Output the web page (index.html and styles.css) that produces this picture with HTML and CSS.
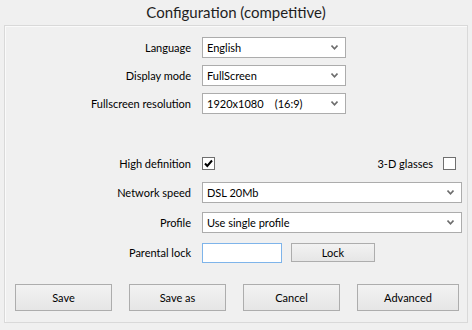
FILE: index.html
```html
<!DOCTYPE html>
<html lang="en">
<head>
  <meta charset="UTF-8">
  <title>Configuration</title>
  <link rel="stylesheet" href="styles.css">
</head>
<body>

  <h1 class="title">Configuration (competitive)</h1>

  <div class="frame">
    <div class="row">
      <label class="label">Language</label>
      <div class="combo short"><span>English</span><svg class="arrow" viewBox="0 0 7 5"><path d="M0.5 0.5 L3.5 3.8 L6.5 0.5" /></svg></div>
    </div>
    <div class="row">
      <label class="label">Display mode</label>
      <div class="combo short"><span>FullScreen</span><svg class="arrow" viewBox="0 0 7 5"><path d="M0.5 0.5 L3.5 3.8 L6.5 0.5" /></svg></div>
    </div>
    <div class="row">
      <label class="label">Fullscreen resolution</label>
      <div class="combo short"><span>1920x1080&nbsp;&nbsp;&nbsp;&nbsp;(16:9)</span><svg class="arrow" viewBox="0 0 7 5"><path d="M0.5 0.5 L3.5 3.8 L6.5 0.5" /></svg></div>
    </div>

    <div class="row checks">
      <label class="label">High definition</label>
      <div class="check-line">
        <span class="checkbox checked"><svg viewBox="0 0 11 11"><path d="M2 5.5 L4.3 8 L9 2.5" /></svg></span>
        <span class="check-right">3-D glasses <span class="checkbox"></span></span>
      </div>
    </div>

    <div class="row wide">
      <label class="label">Network speed</label>
      <div class="combo"><span>DSL 20Mb</span><svg class="arrow" viewBox="0 0 7 5"><path d="M0.5 0.5 L3.5 3.8 L6.5 0.5" /></svg></div>
    </div>
    <div class="row wide">
      <label class="label">Profile</label>
      <div class="combo"><span>Use single profile</span><svg class="arrow" viewBox="0 0 7 5"><path d="M0.5 0.5 L3.5 3.8 L6.5 0.5" /></svg></div>
    </div>
    <div class="row wide">
      <label class="label">Parental lock</label>
      <div class="lock-line">
        <input type="text" class="field">
        <button class="btn lock">Lock</button>
      </div>
    </div>

    <div class="buttons">
      <button class="btn">Save</button>
      <button class="btn">Save as</button>
      <button class="btn">Cancel</button>
      <button class="btn advanced">Advanced</button>
    </div>
  </div>

</body>
</html>
```

FILE: styles.css
```css
* {
  margin: 0;
  padding: 0;
  box-sizing: border-box;
}

body {
  background: #f0f0f0;
  font-family: Lato, "Noto Sans", sans-serif;
  font-size: 11px;
  color: #000;
  width: 472px;
  height: 330px;
  overflow: hidden;
}

.title {
  font-size: 15px;
  font-weight: normal;
  text-align: center;
  color: #1e1e1e;
  height: 25px;
  line-height: 24px;
}

.frame {
  margin: 0 4px;
  height: 298px;
  border: 1px solid #d9d9d9;
  box-shadow: inset 1px 1px 0 #fafafa;
  padding: 11px 5px 0 0;
}

.row {
  display: grid;
  grid-template-columns: 186px 1fr;
  column-gap: 11px;
  align-items: center;
  height: 21px;
  margin-bottom: 7px;
}

.label {
  text-align: right;
  white-space: nowrap;
}

.combo {
  display: flex;
  align-items: center;
  justify-content: space-between;
  height: 21px;
  background: #fff;
  border: 1px solid #acacac;
  padding: 0 7px 0 4px;
}

.combo.short {
  width: 144px;
}

.arrow {
  width: 7px;
  height: 5px;
  fill: none;
  stroke: #6d6d6d;
  stroke-width: 1.6;
}

.checks {
  margin-top: 39px;
  margin-bottom: 8px;
}

.check-line {
  display: flex;
  align-items: center;
  justify-content: space-between;
  padding-right: 6px;
}

.check-right {
  display: flex;
  align-items: center;
  gap: 10px;
}

.checkbox {
  display: inline-block;
  width: 13px;
  height: 13px;
  background: #fff;
  border: 1px solid #6f6f6f;
}

.checkbox svg {
  display: block;
  width: 11px;
  height: 11px;
  fill: none;
  stroke: #000;
  stroke-width: 2;
}

.wide {
  margin-bottom: 9px;
}

.lock-line {
  display: flex;
  align-items: center;
  gap: 9px;
}

.field {
  width: 80px;
  height: 20px;
  border: 1px solid #7eb4ea;
  background: #fff;
}

.btn {
  font-family: Lato, "Noto Sans", sans-serif;
  font-size: 11px;
  color: #000;
  background: linear-gradient(#f2f2f2, #e6e6e6);
  border: 1px solid #adadad;
  height: 27px;
  width: 97px;
}

.btn.lock {
  width: 84px;
  height: 19px;
}

.buttons {
  display: flex;
  gap: 17px;
  margin-top: 21px;
  padding-left: 10px;
}

.btn.advanced {
  width: 102px;
}
```
